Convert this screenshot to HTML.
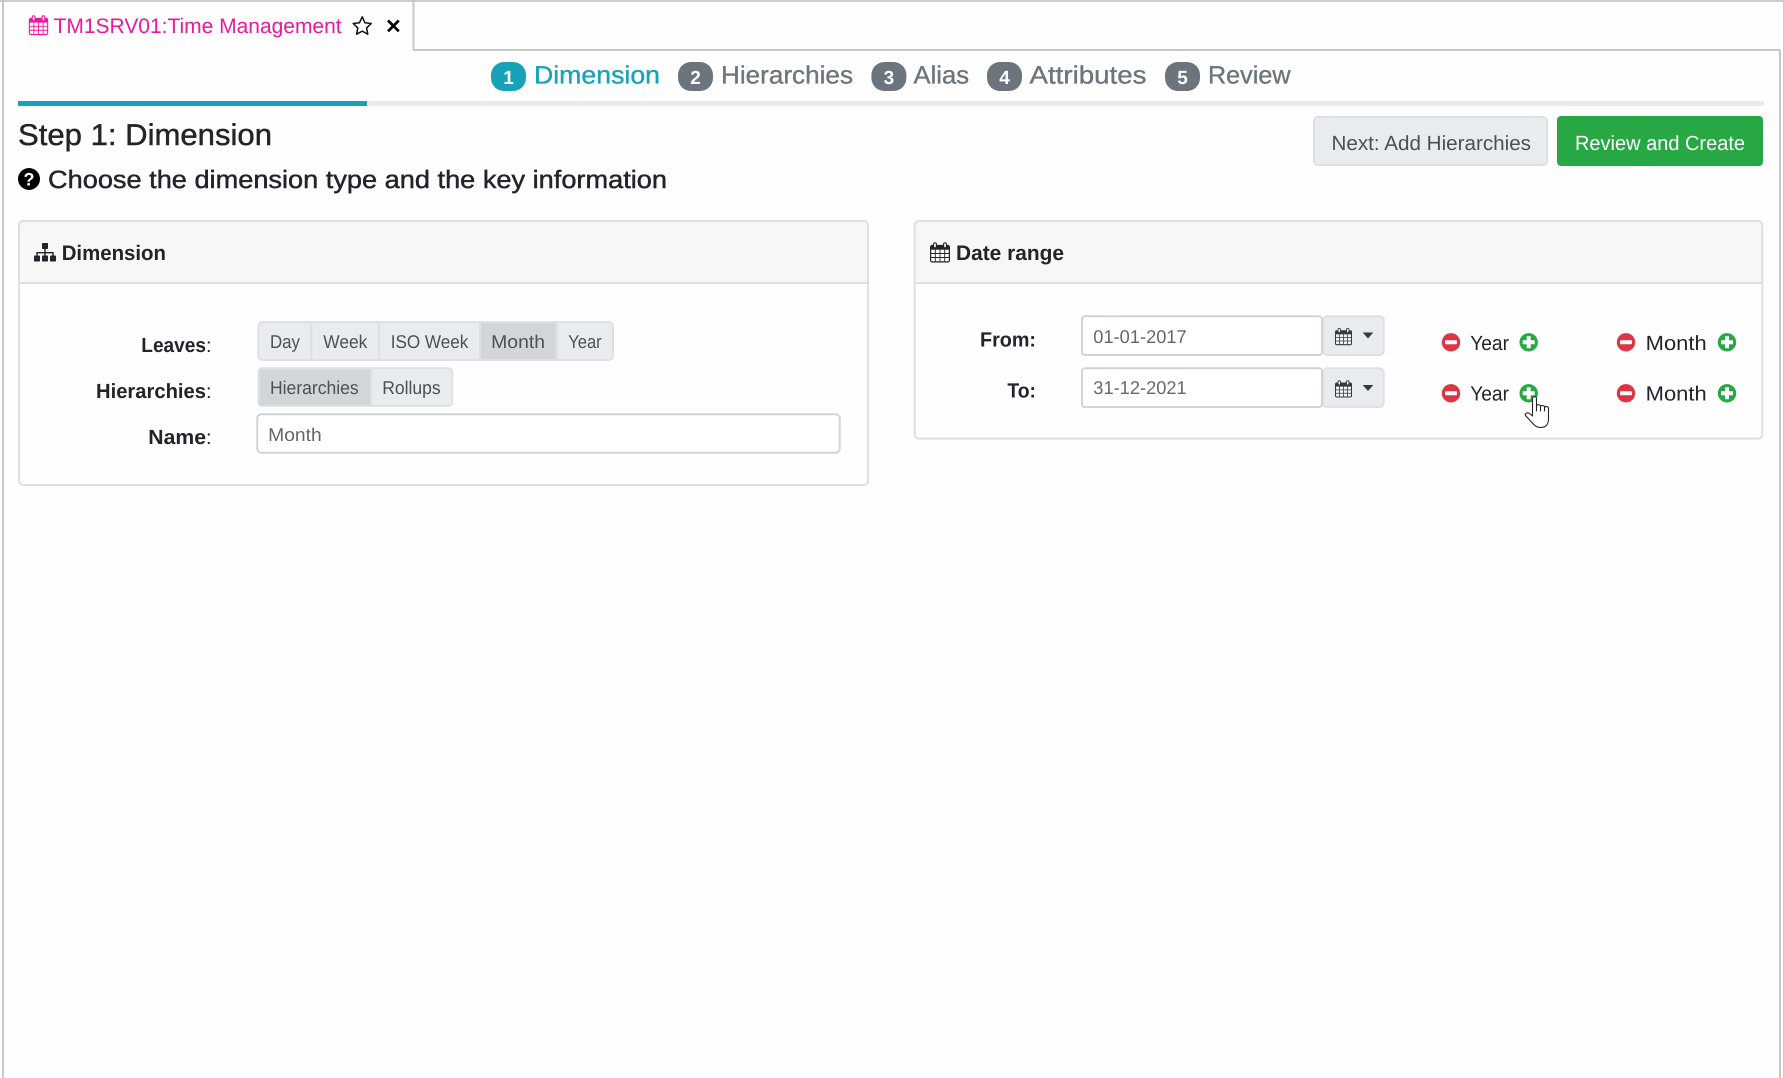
<!DOCTYPE html>
<html lang="en">
<head>
<meta charset="utf-8">
<title>TM1SRV01:Time Management</title>
<style>
html,body{margin:0;padding:0;background:#fefefe;width:1784px;height:1078px;overflow:hidden}
svg{display:block}
text{font-family:"Liberation Sans",Arial,sans-serif;font-size:20px;fill:#212529;text-rendering:geometricPrecision}
.b{font-weight:700}
.step{font-size:25px;fill:#6c757d;stroke:#6c757d;stroke-width:.35}
.num{font-size:19px;font-weight:700;fill:#fff;text-anchor:middle}
.btn{font-size:20.5px;fill:#495057}
.grp{font-size:18.5px;fill:#495057}
.inp{font-size:18.5px;fill:#5f6871}
.lbl{font-size:20.5px;font-weight:700}
.hd{font-size:21px;font-weight:700}
.spin{font-size:20.5px}
</style>
</head>
<body>
<svg width="1784" height="1078" viewBox="0 0 1784 1078" xmlns="http://www.w3.org/2000/svg">
<defs>
<symbol id="cal" viewBox="0 0 20 20">
  <rect x="0.6" y="3" width="18.8" height="16.4" rx="1.6" fill="#fff" fill-opacity="0.35" stroke="currentColor" stroke-width="1.2"/>
  <rect x="0.6" y="3" width="18.8" height="4.2" fill="currentColor"/>
  <path d="M5.3 7v12M10 7v12M14.7 7v12M1 11h18M1 15h18" stroke="currentColor" stroke-width="0.9" fill="none"/>
  <rect x="3.6" y="0.3" width="2.8" height="5" rx="1.3" fill="#fff" stroke="currentColor" stroke-width="1.1"/>
  <rect x="13.6" y="0.3" width="2.8" height="5" rx="1.3" fill="#fff" stroke="currentColor" stroke-width="1.1"/>
</symbol>
</defs>

<!-- window frame -->
<rect x="0" y="0" width="1784" height="1078" fill="#fefefe"/>
<rect x="0" y="0" width="1784" height="2" fill="#cccccc"/>
<rect x="2" y="0" width="2" height="1078" fill="#c8c8c8"/>
<rect x="1783" y="0" width="1" height="1078" fill="#cccccc"/>
<rect x="1779" y="50" width="2" height="1028" fill="#c8c8c8"/>
<rect x="412.5" y="0" width="2" height="51" fill="#c8c8c8"/>
<rect x="412.5" y="49" width="1368" height="2" fill="#c8c8c8"/>

<!-- tab -->
<use href="#cal" x="28.7" y="15" width="19.6" height="20.7" style="color:#e9199c"/>
<text x="53.6" y="33" textLength="288" lengthAdjust="spacingAndGlyphs" style="font-size:21px;fill:#e9199c">TM1SRV01:Time Management</text>
<path d="M362.2 16.8l2.7 5.9 6.3.8-4.6 4.4 1.2 6.3-5.6-3.1-5.6 3.1 1.2-6.3-4.6-4.4 6.3-.8z" fill="#fff" stroke="#111" stroke-width="1.5" stroke-linejoin="round"/>
<path d="M388 20.5l10.8 10.8M398.8 20.5l-10.8 10.8" stroke="#000" stroke-width="2.7" fill="none"/>

<!-- wizard steps -->
<rect x="491" y="62" width="35" height="29" rx="13" fill="#17a2b8"/>
<text class="num" x="508.5" y="84">1</text>
<text class="step" x="534" y="83.5" textLength="126" lengthAdjust="spacingAndGlyphs" style="fill:#17a2b8;stroke:#17a2b8">Dimension</text>
<rect x="678" y="62" width="35" height="29" rx="13" fill="#6c757d"/>
<text class="num" x="695.5" y="84">2</text>
<text class="step" x="721" y="83.5" textLength="132" lengthAdjust="spacingAndGlyphs">Hierarchies</text>
<rect x="871.4" y="62" width="35" height="29" rx="13" fill="#6c757d"/>
<text class="num" x="888.9" y="84">3</text>
<text class="step" x="913.5" y="83.5" textLength="55.5" lengthAdjust="spacingAndGlyphs">Alias</text>
<rect x="987" y="62" width="35" height="29" rx="13" fill="#6c757d"/>
<text class="num" x="1004.5" y="84">4</text>
<text class="step" x="1029.5" y="83.5" textLength="117" lengthAdjust="spacingAndGlyphs">Attributes</text>
<rect x="1165" y="62" width="35" height="29" rx="13" fill="#6c757d"/>
<text class="num" x="1182.5" y="84">5</text>
<text class="step" x="1208" y="83.5" textLength="82.5" lengthAdjust="spacingAndGlyphs">Review</text>

<!-- progress -->
<rect x="18" y="101" width="1746" height="5" rx="2" fill="#e9ecef"/>
<rect x="18" y="101" width="349" height="5" fill="#17a2b8"/>

<!-- title -->
<text x="18" y="145" textLength="254" lengthAdjust="spacingAndGlyphs" style="font-size:30px;stroke:#212529;stroke-width:.45">Step 1: Dimension</text>
<circle cx="29" cy="179" r="11" fill="#000"/>
<text x="29" y="185.5" class="b" style="font-size:18px;fill:#fff;text-anchor:middle">?</text>
<text x="48" y="188" textLength="619" lengthAdjust="spacingAndGlyphs" style="font-size:25px;stroke:#212529;stroke-width:.45">Choose the dimension type and the key information</text>

<!-- top buttons -->
<rect x="1314" y="117" width="233" height="48" rx="4" fill="#e9ecef" stroke="#dee1e4" stroke-width="2"/>
<text class="btn" x="1331.5" y="150" textLength="199.5" lengthAdjust="spacingAndGlyphs">Next: Add Hierarchies</text>
<rect x="1557" y="116" width="206" height="50" rx="4" fill="#28a745"/>
<text class="btn" x="1575" y="150" textLength="170" lengthAdjust="spacingAndGlyphs" style="fill:#fff">Review and Create</text>

<!-- Dimension panel -->
<rect x="19" y="221" width="849" height="264" rx="4" fill="#fefefe" stroke="#dfdfdf" stroke-width="2"/>
<path d="M20 282V226q0-4 4-4H863q4 0 4 4V282z" fill="#f7f7f7"/>
<rect x="20" y="282" width="847" height="2" fill="#dfdfdf"/>
<!-- sitemap icon -->
<g fill="#212529">
  <rect x="42" y="243" width="6" height="6" rx=".8"/>
  <path d="M44.3 249h1.4v3h8v3.5h-1.4v-2.1h-6.6v2.1h-1.4v-2.1h-6.6v2.1h-1.4v-3.5h8z"/>
  <rect x="34" y="255.5" width="6" height="6" rx=".8"/>
  <rect x="42" y="255.5" width="6" height="6" rx=".8"/>
  <rect x="50" y="255.5" width="6" height="6" rx=".8"/>
</g>
<text class="hd" x="61.7" y="260" textLength="104.3" lengthAdjust="spacingAndGlyphs">Dimension</text>

<text class="lbl" x="141.3" y="352" textLength="64.7" lengthAdjust="spacingAndGlyphs">Leaves</text><text x="206" y="352" style="font-size:20px">:</text>
<text class="lbl" x="96" y="398" textLength="110" lengthAdjust="spacingAndGlyphs">Hierarchies</text><text x="206" y="398" style="font-size:20px">:</text>
<text class="lbl" x="148.3" y="444" textLength="57.7" lengthAdjust="spacingAndGlyphs">Name</text><text x="206" y="444" style="font-size:20px">:</text>

<!-- Leaves group -->
<rect x="258.3" y="322" width="354.7" height="38" rx="4" fill="#e9ecef" stroke="#dee1e4" stroke-width="2"/>
<rect x="310" y="322" width="2.5" height="38" fill="#dee1e4"/>
<rect x="378" y="322" width="2" height="38" fill="#dee1e4"/>
<rect x="479" y="323" width="2" height="36" fill="#dee1e4"/>
<rect x="481" y="323" width="74.5" height="36" fill="#d3d6d9"/>
<rect x="555.5" y="323" width="2.5" height="36" fill="#dee1e4"/>
<text class="grp" x="270" y="348" textLength="30" lengthAdjust="spacingAndGlyphs">Day</text>
<text class="grp" x="323.3" y="348" textLength="44" lengthAdjust="spacingAndGlyphs">Week</text>
<text class="grp" x="390.7" y="348" textLength="77.6" lengthAdjust="spacingAndGlyphs">ISO Week</text>
<text class="grp" x="491.2" y="348" textLength="53.8" lengthAdjust="spacingAndGlyphs">Month</text>
<text class="grp" x="568.3" y="348" textLength="33.4" lengthAdjust="spacingAndGlyphs">Year</text>

<!-- Hierarchies group -->
<rect x="258.3" y="368.3" width="194" height="37.7" rx="4" fill="#e9ecef" stroke="#dee1e4" stroke-width="2"/>
<rect x="259.3" y="369.3" width="111" height="35.7" fill="#d3d6d9"/>
<rect x="370.3" y="369.3" width="2" height="35.7" fill="#dee1e4"/>
<text class="grp" x="270" y="394" textLength="88.7" lengthAdjust="spacingAndGlyphs">Hierarchies</text>
<text class="grp" x="382.2" y="394" textLength="58.5" lengthAdjust="spacingAndGlyphs">Rollups</text>

<!-- Name input -->
<rect x="257.3" y="414.3" width="582.4" height="38.4" rx="4" fill="#fff" stroke="#ced4da" stroke-width="2"/>
<text class="inp" x="268.2" y="441" textLength="53.5" lengthAdjust="spacingAndGlyphs">Month</text>

<!-- Date range panel -->
<rect x="914.7" y="221" width="847.6" height="217.6" rx="4" fill="#fefefe" stroke="#dfdfdf" stroke-width="2"/>
<path d="M915.7 282V226q0-4 4-4H1757q4 0 4 4V282z" fill="#f7f7f7"/>
<rect x="915.7" y="282" width="845.6" height="2" fill="#dfdfdf"/>
<use href="#cal" x="930" y="242.3" width="20" height="20.4" style="color:#212529"/>
<text class="hd" x="956" y="260" textLength="108" lengthAdjust="spacingAndGlyphs">Date range</text>

<text class="lbl" x="980" y="346.7" textLength="56" lengthAdjust="spacingAndGlyphs">From:</text>
<text class="lbl" x="1007.4" y="397.7" textLength="28.6" lengthAdjust="spacingAndGlyphs">To:</text>

<!-- From input -->
<rect x="1323" y="316.3" width="60.7" height="38.7" rx="4" fill="#e9ecef" stroke="#dee1e4" stroke-width="2"/>
<rect x="1082" y="316.3" width="240" height="38.7" rx="3" fill="#fff" stroke="#ced4da" stroke-width="2"/>
<text class="inp" x="1093.3" y="343" textLength="93.4" lengthAdjust="spacingAndGlyphs">01-01-2017</text>
<use href="#cal" x="1335" y="327.7" width="17" height="18" style="color:#343a40"/>
<path d="M1362.7 332.5h10.6l-5.3 6z" fill="#343a40"/>

<!-- To input -->
<rect x="1323" y="368.3" width="60.7" height="38.7" rx="4" fill="#e9ecef" stroke="#dee1e4" stroke-width="2"/>
<rect x="1082" y="368.3" width="240" height="38.7" rx="3" fill="#fff" stroke="#ced4da" stroke-width="2"/>
<text class="inp" x="1093.3" y="394" textLength="93.4" lengthAdjust="spacingAndGlyphs">31-12-2021</text>
<use href="#cal" x="1335" y="380" width="17" height="18" style="color:#343a40"/>
<path d="M1362.7 385h10.6l-5.3 6z" fill="#343a40"/>

<!-- spinners row 1 -->
<circle cx="1451" cy="342.3" r="9.2" fill="#dc3545"/><rect x="1445" y="340.3" width="12" height="4" rx="1" fill="#fff"/>
<text class="spin" x="1470.2" y="350" textLength="38.8" lengthAdjust="spacingAndGlyphs">Year</text>
<circle cx="1528.7" cy="342.3" r="9.2" fill="#28a745"/><path d="M1522.7 340.3h4v-4h4v4h4v4h-4v4h-4v-4h-4z" fill="#fff"/>
<circle cx="1626" cy="342.3" r="9.2" fill="#dc3545"/><rect x="1620" y="340.3" width="12" height="4" rx="1" fill="#fff"/>
<text class="spin" x="1645.7" y="350" textLength="61" lengthAdjust="spacingAndGlyphs">Month</text>
<circle cx="1727" cy="342.3" r="9.2" fill="#28a745"/><path d="M1721 340.3h4v-4h4v4h4v4h-4v4h-4v-4h-4z" fill="#fff"/>

<!-- spinners row 2 -->
<circle cx="1451" cy="393.3" r="9.2" fill="#dc3545"/><rect x="1445" y="391.3" width="12" height="4" rx="1" fill="#fff"/>
<text class="spin" x="1470.2" y="400.7" textLength="38.8" lengthAdjust="spacingAndGlyphs">Year</text>
<circle cx="1528.7" cy="393.3" r="9.2" fill="#28a745"/><path d="M1522.7 391.3h4v-4h4v4h4v4h-4v4h-4v-4h-4z" fill="#fff"/>
<circle cx="1626" cy="393.3" r="9.2" fill="#dc3545"/><rect x="1620" y="391.3" width="12" height="4" rx="1" fill="#fff"/>
<text class="spin" x="1645.7" y="400.7" textLength="61" lengthAdjust="spacingAndGlyphs">Month</text>
<circle cx="1727" cy="393.3" r="9.2" fill="#28a745"/><path d="M1721 391.3h4v-4h4v4h4v4h-4v4h-4v-4h-4z" fill="#fff"/>

<!-- hand cursor -->
<path d="M1532.5 416V399C1532.5 395.8 1536.5 395.8 1536.5 399V411V406.5C1536.5 404 1540.5 404 1540.5 406.5V411V407C1540.5 405 1544.5 405 1544.5 407V411V408C1544.5 406 1548.5 406 1548.5 408.5V419C1548.5 424 1546 427.5 1541 427.5C1536 427.5 1534 425 1531 421.5L1525.5 415.5C1524.5 413.5 1527.5 412 1529.5 413.5Z" fill="#fff" stroke="#22262a" stroke-width="1.1" stroke-linejoin="round"/>
</svg>
</body>
</html>
